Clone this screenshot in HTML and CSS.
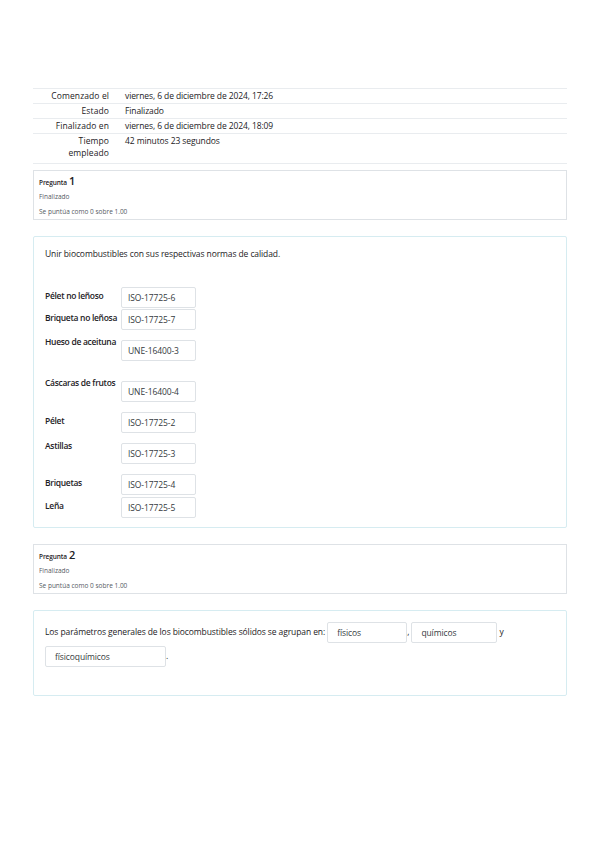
FILE: index.html
```html
<!DOCTYPE html>
<html lang="es">
<head>
<meta charset="utf-8">
<title>Revisión del intento</title>
<link rel="stylesheet" href="styles.css">
</head>
<body>
<div class="page">
  <table class="summary">
    <tbody>
      <tr><th>Comenzado el</th><td>viernes, 6 de diciembre de 2024, 17:26</td></tr>
      <tr><th>Estado</th><td>Finalizado</td></tr>
      <tr><th>Finalizado en</th><td>viernes, 6 de diciembre de 2024, 18:09</td></tr>
      <tr class="last"><th>Tiempo empleado</th><td>42 minutos 23 segundos</td></tr>
    </tbody>
  </table>

  <div class="info">
    <div class="qno"><span class="qlabel">Pregunta</span> <span class="qnum">1</span></div>
    <div class="state">Finalizado</div>
    <div class="grade">Se puntúa como 0 sobre 1.00</div>
  </div>

  <div class="formulation f1">
    <div class="qtext">Unir biocombustibles con sus respectivas normas de calidad.</div>
    <div class="matches">
      <div class="mrow r1"><span class="mlabel lo3">Pélet no leñoso</span><span class="box">ISO-17725-6</span></div>
      <div class="mrow r2"><span class="mlabel lo3">Briqueta no leñosa</span><span class="box">ISO-17725-7</span></div>
      <div class="mrow r3"><span class="mlabel">Hueso de aceituna</span><span class="box bo4">UNE-16400-3</span></div>
      <div class="mrow r4"><span class="mlabel">Cáscaras de frutos</span><span class="box bo4">UNE-16400-4</span></div>
      <div class="mrow r5"><span class="mlabel lo3">Pélet</span><span class="box">ISO-17725-2</span></div>
      <div class="mrow r6"><span class="mlabel">Astillas</span><span class="box bo3">ISO-17725-3</span></div>
      <div class="mrow r7"><span class="mlabel lo3">Briquetas</span><span class="box">ISO-17725-4</span></div>
      <div class="mrow r8"><span class="mlabel lo3">Leña</span><span class="box">ISO-17725-5</span></div>
    </div>
  </div>

  <div class="info">
    <div class="qno"><span class="qlabel">Pregunta</span> <span class="qnum">2</span></div>
    <div class="state">Finalizado</div>
    <div class="grade">Se puntúa como 0 sobre 1.00</div>
  </div>

  <div class="formulation f2">
    <p class="cloze">Los parámetros generales de los biocombustibles sólidos se agrupan en: <span class="blank w80">físicos</span>, <span class="blank w86">químicos</span> y <span class="blank w121">físicoquímicos</span>.</p>
  </div>
</div>
</body>
</html>
```

FILE: styles.css
```css
html, body {
  margin: 0;
  padding: 0;
  background: #ffffff;
}

body {
  font-family: "Open Sans", "Liberation Sans", sans-serif;
  font-size: 8.5px;
  letter-spacing: -0.1px;
  color: #1d2125;
}

.page {
  width: 534px;
  margin-left: 33px;
  padding-top: 88px;
}

.summary {
  width: 100%;
  table-layout: fixed;
  border-collapse: collapse;
  border-bottom: 1px solid #e9ecef;
}

.summary th,
.summary td {
  border-top: 1px solid #e9ecef;
  line-height: 12px;
  padding: 1px 4px;
  vertical-align: top;
  font-weight: normal;
}

.summary th {
  box-sizing: border-box;
  width: 88px;
  text-align: right;
  padding-left: 14px;
  padding-right: 12px;
  letter-spacing: 0.1px;
}

.summary td {
  padding-left: 4px;
}

.summary tr.last th,
.summary tr.last td {
  padding-bottom: 4px;
}

.info {
  margin-top: 6px;
  border: 1px solid #dee2e6;
  padding: 3px 5px 3px;
  height: 42px;
}

.qno {
  line-height: 14px;
  height: 14px;
}

.qlabel {
  font-size: 6.5px;
  font-weight: 600;
  letter-spacing: -0.1px;
  color: #1d2125;
}

.qnum {
  font-size: 11px;
  font-weight: 600;
  letter-spacing: 0;
  color: #1d2125;
}

.state,
.grade {
  font-size: 6.5px;
  letter-spacing: 0;
  color: #555a5f;
  line-height: 15px;
}

.state {
  margin-top: 1px;
}

.formulation {
  margin-top: 16px;
  border: 1px solid #d6ecf1;
  border-radius: 2px;
  background: #ffffff;
  padding: 11px 11px 9px;
}

.formulation + .info {
  margin-top: 16px;
}

.qtext {
  line-height: 12px;
}

.matches {
  margin-top: 27px;
}

.mrow {
  display: flex;
  align-items: flex-start;
}

.mlabel {
  width: 76px;
  line-height: 12px;
  font-weight: 600;
  letter-spacing: -0.3px;
  white-space: nowrap;
}

.lo3 { margin-top: 3px; }
.bo3 { margin-top: 3px; }
.bo4 { margin-top: 4px; }

.box {
  box-sizing: border-box;
  width: 75px;
  height: 21px;
  border: 1px solid #dee2e6;
  border-radius: 2px;
  padding: 0 6px;
  line-height: 19px;
  color: #343a40;
}

.r2 { margin-top: 1px; }
.r3 { margin-top: 6px; }
.r4 { margin-top: 16px; }
.r5 { margin-top: 10px; }
.r6 { margin-top: 7px; }
.r7 { margin-top: 10px; }
.r8 { margin-top: 2px; }

.f2 {
  padding: 9px 11px 27px;
}

.cloze {
  margin: 0;
  line-height: 24px;
}

.blank {
  display: inline-block;
  box-sizing: border-box;
  height: 21px;
  border: 1px solid #dee2e6;
  border-radius: 2px;
  padding: 0 6px 0 9px;
  line-height: 19px;
  vertical-align: middle;
  color: #343a40;
}

.w80 { width: 80px; }
.w86 { width: 86px; }
.w121 { width: 121px; }
```
